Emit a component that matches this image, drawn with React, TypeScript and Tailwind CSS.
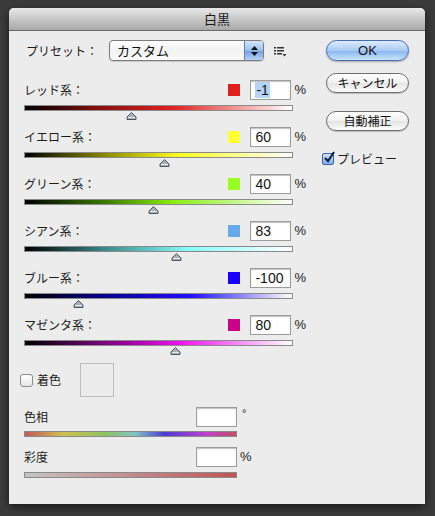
import React from 'react';

type Row = { label: string; value: string; swatch: string; grad: string; pos: number };

const rows: Row[] = [
  { label: 'レッド系', value: '-1', swatch: 'bg-[#e0201c]', grad: 'bg-[linear-gradient(to_right,#000_0%,#8a1010_28%,#e02020_55%,#ffffff_100%)]', pos: -1 },
  { label: 'イエロー系', value: '60', swatch: 'bg-[#ffff33]', grad: 'bg-[linear-gradient(to_right,#000_0%,#8a8a00_30%,#ffff22_58%,#ffffff_100%)]', pos: 60 },
  { label: 'グリーン系', value: '40', swatch: 'bg-[#99ff22]', grad: 'bg-[linear-gradient(to_right,#000_0%,#3c7a00_30%,#88ee10_55%,#ffffff_100%)]', pos: 40 },
  { label: 'シアン系', value: '83', swatch: 'bg-[#66aaee]', grad: 'bg-[linear-gradient(to_right,#000_0%,#3a8a8a_30%,#88ffff_62%,#ffffff_100%)]', pos: 83 },
  { label: 'ブルー系', value: '-100', swatch: 'bg-[#1a00ff]', grad: 'bg-[linear-gradient(to_right,#000_0%,#0a0090_30%,#2010ff_62%,#ffffff_100%)]', pos: -100 },
  { label: 'マゼンタ系', value: '80', swatch: 'bg-[#cc0088]', grad: 'bg-[linear-gradient(to_right,#000_0%,#7a0080_30%,#ee10ee_58%,#ffffff_100%)]', pos: 80 },
];

const jp = { fontFamily: '"Noto Sans CJK JP", "Noto Sans", sans-serif' };
const num = { fontFamily: '"Liberation Sans", Arial, sans-serif' };

const Thumb = ({ left }: { left: number }) => (
  <svg className="absolute top-[7px]" style={{ left: left - 5 }} width="11" height="8" viewBox="0 0 11 8">
    <path d="M5.5 0.5 L10 5 L10 7.5 L1 7.5 L1 5 Z" fill="#aab0b8" stroke="#4e555e" strokeWidth="1" />
    <path d="M2 5.5 L9 5.5" stroke="#e4e7ea" strokeWidth="1" />
  </svg>
);

const NumBox = ({ value, selected, w = 'w-[41px]' }: { value?: string; selected?: boolean; w?: string }) => (
  <div className={`${w} h-[20px] bg-white border border-[#9c9c9c] shadow-[inset_0_1px_1px_rgba(0,0,0,0.25)] flex items-center pl-[4px] text-[14px] text-[#111] leading-none`} style={num}>
    {value && <span className={selected ? 'bg-[#b4d4fb] px-[1px] py-[1px]' : ''}>{value}</span>}
  </div>
);

const SliderRow = ({ r, first }: { r: Row; first?: boolean }) => {
  const left = ((r.pos + 200) / 500) * 269;
  return (
    <div className="h-[47px]">
      <div className="flex items-center h-[20px] w-[282px]">
        <span className="flex-1 text-[12px] text-[#1c1c1c]" style={jp}>{r.label}：</span>
        <div className={`w-[12px] h-[12px] ${r.swatch} mr-[10px]`} />
        <NumBox value={r.value} selected={first} />
        <span className="ml-[3px] text-[13px] text-[#222]" style={num}>%</span>
      </div>
      <div className="relative mt-[5px] w-[269px]">
        <div className={`h-[6px] border border-[#8a8a8a] ${r.grad}`} />
        <Thumb left={left} />
      </div>
    </div>
  );
};

const ListIcon = () => (
  <svg width="13" height="11" viewBox="0 0 13 11">
    <rect x="0" y="1" width="2" height="1.5" fill="#333" />
    <rect x="3" y="1" width="7" height="1.5" fill="#333" />
    <rect x="0" y="4" width="2" height="1.5" fill="#333" />
    <rect x="3" y="4" width="7" height="1.5" fill="#333" />
    <rect x="0" y="7" width="2" height="1.5" fill="#333" />
    <rect x="3" y="7" width="5" height="1.5" fill="#333" />
    <path d="M8.5 8 L12.5 8 L10.5 10.5 Z" fill="#333" />
  </svg>
);

export default function App() {
  return (
    <div className="w-[435px] h-[516px] bg-[#3b3b3b] pt-[8px] pl-[9px]">
      <div className="w-[416px] h-[496px] bg-[#ececec] rounded-t-[5px] shadow-[0_3px_10px_rgba(0,0,0,0.6)] flex flex-col">
        {/* title bar */}
        <div className="h-[23px] rounded-t-[5px] bg-[linear-gradient(to_bottom,#e8e8e8,#c8c8c8_50%,#a8a8a8)] border-b border-[#6a6a6a] flex items-center justify-center text-[13px] text-[#1a1a1a]" style={jp}>
          白黒
        </div>

        <div className="flex flex-1">
          {/* left column */}
          <div className="pl-[15px] pt-[9px] w-[317px]">
            <div className="flex items-center h-[21px]">
              <span className="w-[85px] pl-[2px] text-[12px] text-[#1c1c1c]" style={jp}>プリセット：</span>
              <div className="w-[155px] h-[21px] rounded-[4px] border border-[#7c7c7c] bg-[linear-gradient(to_bottom,#ffffff,#f2f2f2_50%,#fafafa)] shadow-[0_1px_1px_rgba(0,0,0,0.15)] flex overflow-hidden">
                <span className="flex-1 pl-[7px] text-[13px] text-[#111] leading-[19px]" style={jp}>カスタム</span>
                <div className="w-[19px] border-l border-[#5d7fc0] bg-[linear-gradient(to_bottom,#d6e6fa,#98bff0_50%,#6d9fe4_51%,#b6d3f6)] flex flex-col items-center justify-center gap-[2px]">
                  <svg width="7" height="4" viewBox="0 0 7 4"><path d="M3.5 0 L7 4 L0 4 Z" fill="#111" /></svg>
                  <svg width="7" height="4" viewBox="0 0 7 4"><path d="M0 0 L7 0 L3.5 4 Z" fill="#111" /></svg>
                </div>
              </div>
              <div className="ml-[10px] mt-[1px]"><ListIcon /></div>
            </div>

            <div className="mt-[19px]">
              {rows.map((r, i) => (
                <SliderRow key={r.label} r={r} first={i === 0} />
              ))}
            </div>

            {/* tint */}
            <div className="flex items-center mt-[1px] h-[34px] -ml-[4px]">
              <div className="w-[13px] h-[13px] rounded-[3px] border border-[#8c8c8c] bg-[linear-gradient(to_bottom,#ffffff,#e6e6e6)]" />
              <span className="ml-[4px] text-[12px] text-[#1c1c1c]" style={jp}>着色</span>
              <div className="ml-[19px] w-[34px] h-[34px] border border-[#bdbdbd] bg-[#ececec]" />
            </div>

            <div className="mt-[10px] w-[226px]">
              <div className="flex items-center h-[20px]">
                <span className="flex-1 text-[12px] text-[#1c1c1c]" style={jp}>色相</span>
                <NumBox />
                <span className="w-[13px] pl-[5px] text-[11px] text-[#222] self-start -mt-[2px]" style={num}>°</span>
              </div>
              <div className="mt-[4px] w-[213px] h-[6px] border border-[#8a8a8a] bg-[linear-gradient(to_right,#c05a5a_0%,#d0c050_18%,#8cc460_38%,#84c4c4_52%,#4a3ed0_66%,#c040d0_86%,#c05060_100%)]" />
            </div>

            <div className="mt-[10px] w-[226px]">
              <div className="flex items-center h-[20px]">
                <span className="flex-1 text-[12px] text-[#1c1c1c]" style={jp}>彩度</span>
                <NumBox />
                <span className="w-[13px] pl-[3px] text-[13px] text-[#222]" style={num}>%</span>
              </div>
              <div className="mt-[5px] w-[213px] h-[6px] border border-[#8a8a8a] bg-[linear-gradient(to_right,#c4c4c4,#c05454)]" />
            </div>
          </div>

          {/* right column */}
          <div className="pt-[9px] flex flex-col">
            <div className="w-[83px] h-[21px] rounded-full border border-[#4a6cb0] bg-[linear-gradient(to_bottom,#dcebfc,#a9cbf5_50%,#86b5ef_51%,#c9e2ff)] shadow-[0_1px_2px_rgba(0,0,0,0.3)] flex items-center justify-center text-[13px] text-[#111]" style={num}>
              OK
            </div>
            <div className="mt-[12px] w-[83px] h-[20px] rounded-full border border-[#6e6e6e] bg-[linear-gradient(to_bottom,#ffffff,#f0f0f0_50%,#e4e4e4_51%,#fbfbfb)] shadow-[0_1px_1px_rgba(0,0,0,0.2)] flex items-center justify-center text-[12px] text-[#111]" style={jp}>
              キャンセル
            </div>
            <div className="mt-[18px] w-[83px] h-[20px] rounded-full border border-[#6e6e6e] bg-[linear-gradient(to_bottom,#ffffff,#f0f0f0_50%,#e4e4e4_51%,#fbfbfb)] shadow-[0_1px_1px_rgba(0,0,0,0.2)] flex items-center justify-center text-[12px] text-[#111]" style={jp}>
              自動補正
            </div>
            <div className="mt-[19px] -ml-[4px] flex items-center">
              <div className="w-[12px] h-[12px] rounded-[2px] border border-[#3f62a8] bg-[linear-gradient(to_bottom,#cfe2fa,#7eaeea)] relative">
                <svg className="absolute -top-[3px] left-0" width="13" height="13" viewBox="0 0 13 13">
                  <path d="M2 7 L5 10 L11 1" fill="none" stroke="#14213f" strokeWidth="2.2" />
                </svg>
              </div>
              <span className="ml-[3px] text-[12px] text-[#1c1c1c]" style={jp}>プレビュー</span>
            </div>
          </div>
        </div>
      </div>
    </div>
  );
}
